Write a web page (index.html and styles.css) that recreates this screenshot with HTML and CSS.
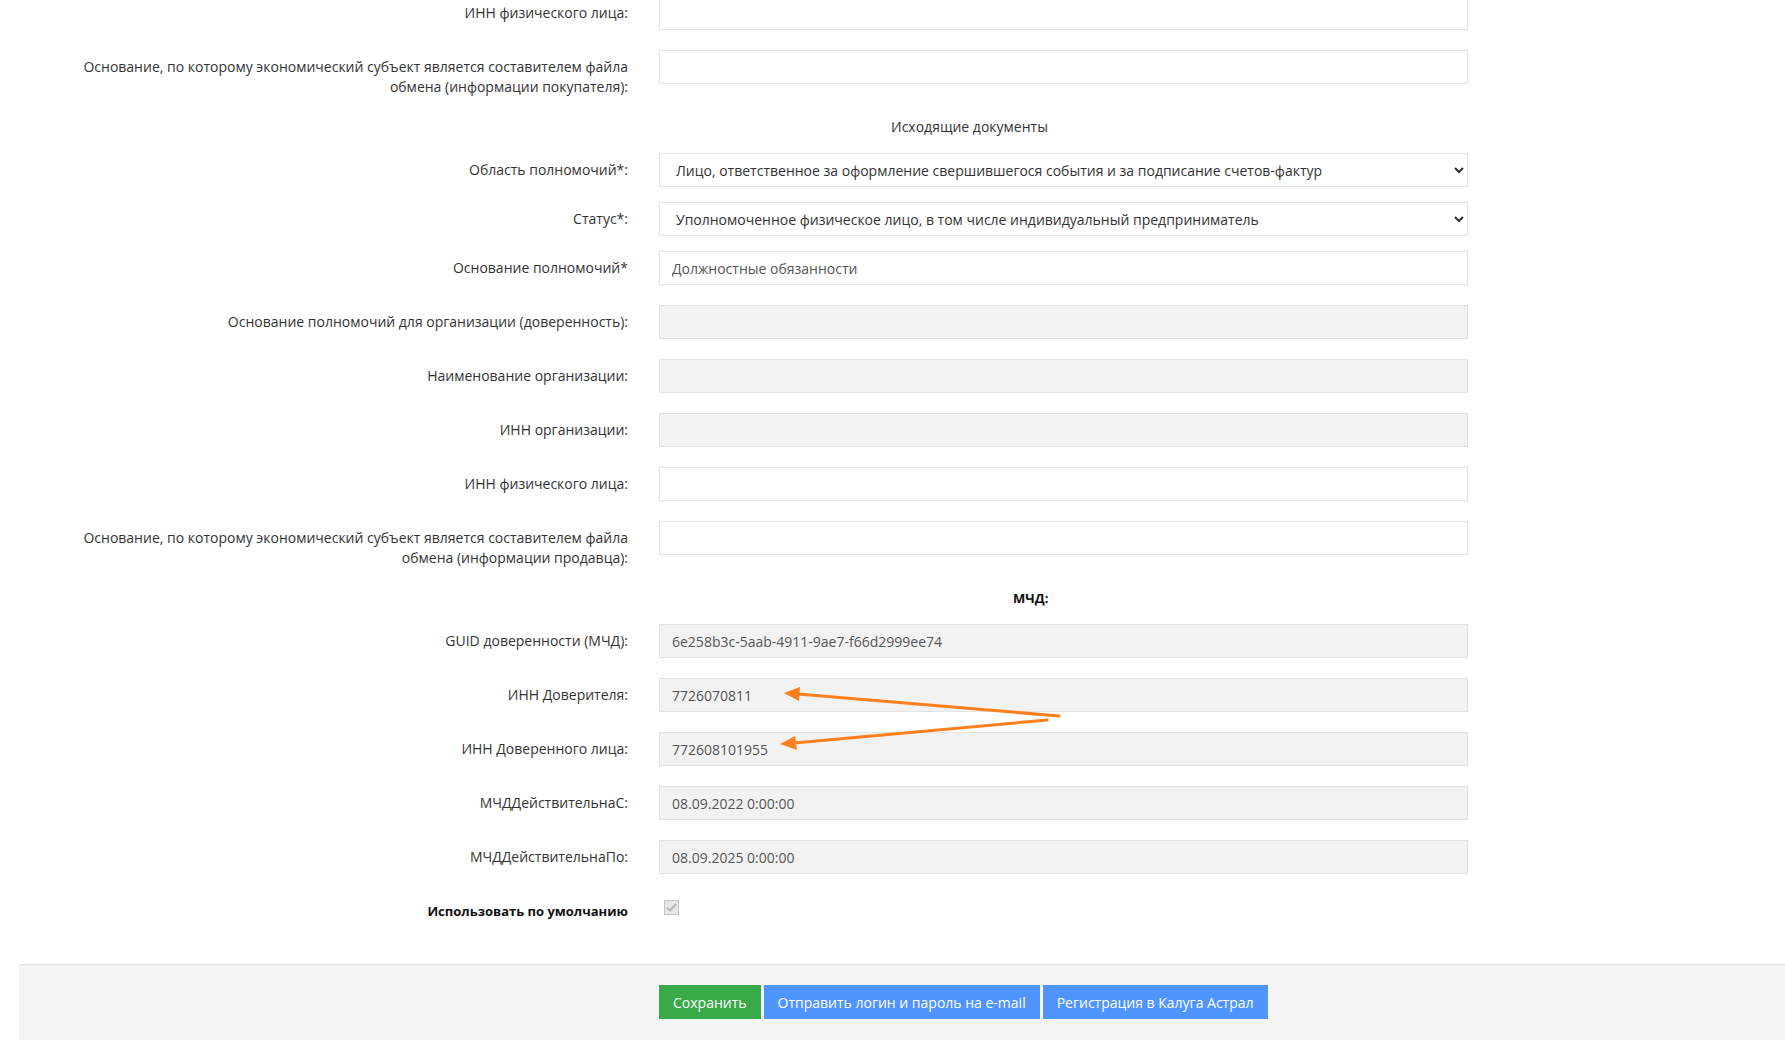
FILE: index.html
```html
<!DOCTYPE html>
<html lang="ru">

<head>
    <meta charset="UTF-8">
    <meta name="viewport" content="width=device-width, initial-scale=1.0">
    <title>Настройки подписанта</title>
    <link rel="stylesheet" href="styles.css">
</head>

<body>
    <div class="page">
        <form class="form">
            <div class="row">
                <label class="label">ИНН физического лица:</label>
                <div class="field"><input class="input" type="text"></div>
            </div>
            <div class="row">
                <label class="label">Основание, по которому экономический субъект является составителем файла обмена (информации покупателя):</label>
                <div class="field"><input class="input" type="text"></div>
            </div>

            <div class="row heading">
                <div></div>
                <div class="headingText outgoing">Исходящие документы</div>
            </div>

            <div class="row tight">
                <label class="label">Область полномочий*:</label>
                <div class="field">
                    <select class="input select">
                        <option>Лицо, ответственное за оформление свершившегося события и за подписание счетов-фактур</option>
                    </select>
                </div>
            </div>
            <div class="row tight">
                <label class="label">Статус*:</label>
                <div class="field">
                    <select class="input select">
                        <option>Уполномоченное физическое лицо, в том числе индивидуальный предприниматель</option>
                    </select>
                </div>
            </div>
            <div class="row">
                <label class="label">Основание полномочий*</label>
                <div class="field"><input class="input" type="text" value="Должностные обязанности"></div>
            </div>
            <div class="row">
                <label class="label">Основание полномочий для организации (доверенность):</label>
                <div class="field"><input class="input" type="text" disabled></div>
            </div>
            <div class="row">
                <label class="label">Наименование организации:</label>
                <div class="field"><input class="input" type="text" disabled></div>
            </div>
            <div class="row">
                <label class="label">ИНН организации:</label>
                <div class="field"><input class="input" type="text" disabled></div>
            </div>
            <div class="row">
                <label class="label">ИНН физического лица:</label>
                <div class="field"><input class="input" type="text"></div>
            </div>
            <div class="row">
                <label class="label">Основание, по которому экономический субъект является составителем файла обмена (информации продавца):</label>
                <div class="field"><input class="input" type="text"></div>
            </div>

            <div class="row heading">
                <div></div>
                <div class="headingText mcd">МЧД:</div>
            </div>

            <div class="row">
                <label class="label">GUID доверенности (МЧД):</label>
                <div class="field"><input class="input" type="text" value="6e258b3c-5aab-4911-9ae7-f66d2999ee74" readonly></div>
            </div>
            <div class="row">
                <label class="label">ИНН Доверителя:</label>
                <div class="field"><input class="input" type="text" value="7726070811" readonly></div>
            </div>
            <div class="row">
                <label class="label">ИНН Доверенного лица:</label>
                <div class="field"><input class="input" type="text" value="772608101955" readonly></div>
            </div>
            <div class="row">
                <label class="label">МЧДДействительнаС:</label>
                <div class="field"><input class="input" type="text" value="08.09.2022 0:00:00" readonly></div>
            </div>
            <div class="row">
                <label class="label">МЧДДействительнаПо:</label>
                <div class="field"><input class="input" type="text" value="08.09.2025 0:00:00" readonly></div>
            </div>
            <div class="row">
                <label class="label bold">Использовать по умолчанию</label>
                <div class="field">
                    <span class="check">
                        <svg width="11" height="9" viewBox="0 0 11 9"><path d="M1 4.5 L4 7.5 L10 1" fill="none" stroke="#b5b5b5" stroke-width="2"/></svg>
                    </span>
                </div>
            </div>
        </form>

        <div class="footer">
            <button class="btn green" type="button">Сохранить</button>
            <button class="btn blue" type="button">Отправить логин и пароль на e-mail</button>
            <button class="btn blue" type="button">Регистрация в Калуга Астрал</button>
        </div>

        <svg class="arrows" width="1785" height="1040" viewBox="0 0 1785 1040">
            <line x1="1059" y1="720" x2="798" y2="698" stroke="#ff7f1e" stroke-width="3" stroke-linecap="round"/>
            <polygon points="784,697 800,691 799,705" fill="#ff7f1e"/>
            <line x1="1047" y1="724" x2="794" y2="747" stroke="#ff7f1e" stroke-width="3" stroke-linecap="round"/>
            <polygon points="780,748 795,740 797,754" fill="#ff7f1e"/>
        </svg>
    </div>
</body>

</html>
```

FILE: styles.css
```css
html, body {
    margin: 0;
    height: 100%;
}

body {
    font-family: "Open Sans", "Liberation Sans", sans-serif;
    font-size: 14px;
    line-height: 20px;
    color: #333;
    background: #fff;
    overflow: hidden;
}

.page {
    position: relative;
    min-height: 100%;
}

.form {
    margin-top: -4px;
    padding-bottom: 23px;
}

.row {
    display: grid;
    grid-template-columns: 570px 809px;
    column-gap: 31px;
    padding-left: 58px;
    margin-bottom: 20px;
}

.row.tight {
    margin-bottom: 15px;
}

.row.heading {
    margin-top: 1px;
    margin-bottom: 16px;
}

.label {
    text-align: right;
    padding-top: 7px;
}

.label.bold {
    font-size: 13px;
    font-weight: bold;
    color: #111;
}

.headingText.outgoing {
    padding-left: 232px;
}

.headingText.mcd {
    padding-left: 354px;
    font-size: 13px;
    font-weight: bold;
    color: #111;
}

.input {
    display: block;
    width: 100%;
    height: 34px;
    box-sizing: border-box;
    border: 1px solid #e3e3e3;
    border-radius: 0;
    padding: 0 12px;
    font-family: inherit;
    font-size: 14px;
    color: #555;
    background: #fff;
    outline: none;
}

.input:disabled,
.input[readonly] {
    background: #f2f2f2;
}

.select {
    padding-left: 12px;
    color: #333;
}

.check {
    display: flex;
    align-items: center;
    justify-content: center;
    width: 15px;
    height: 15px;
    box-sizing: border-box;
    margin: 6px 0 0 5px;
    border: 1px solid #c4c4c4;
    background: #e6e6e6;
}

.footer {
    margin-left: 19px;
    border-top: 1px solid #e3e3e3;
    background: #f4f4f4;
    padding: 20px 0 30px 640px;
    display: flex;
    gap: 3px;
}

.btn {
    height: 34px;
    padding: 0 14px;
    border: none;
    border-radius: 0;
    font-family: inherit;
    font-size: 14px;
    color: #fff;
    cursor: pointer;
}

.btn.green {
    background: #39aa48;
}

.btn.blue {
    background: #4f94ff;
}

.arrows {
    position: absolute;
    top: 0;
    left: 0;
    pointer-events: none;
}
```
